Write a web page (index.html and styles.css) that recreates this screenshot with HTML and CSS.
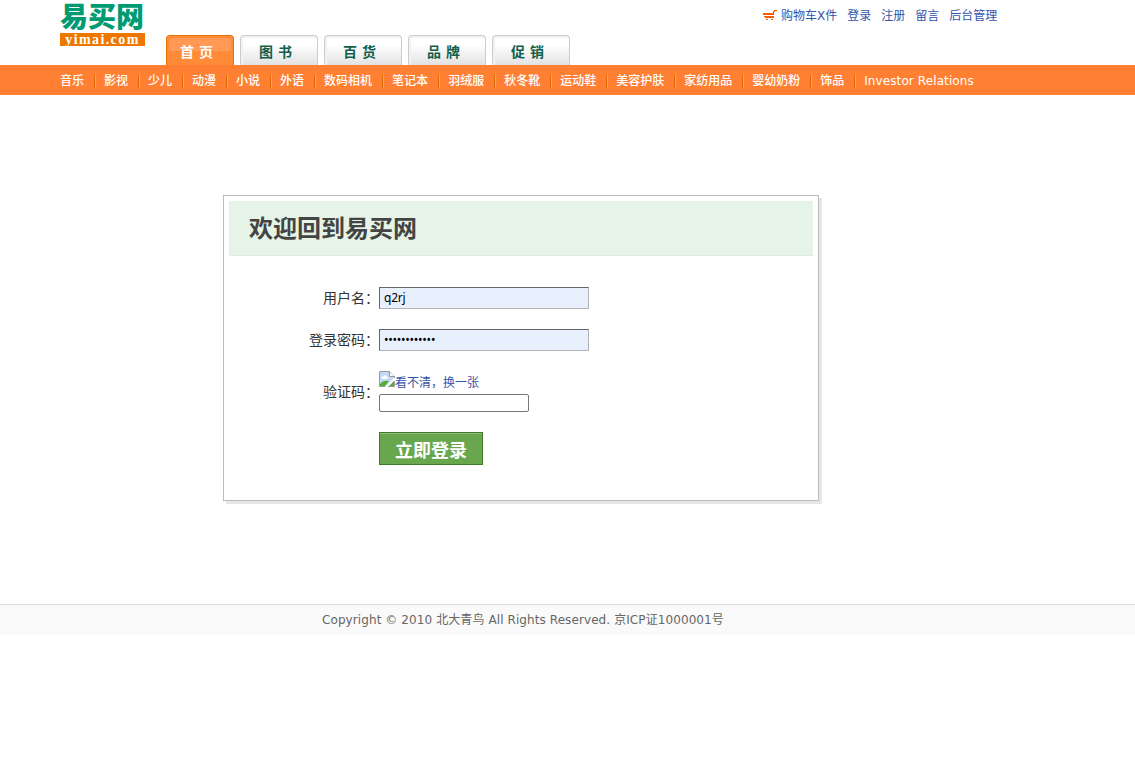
FILE: index.html
```html
<!DOCTYPE html>
<html lang="zh-CN">
<head>
    <meta charset="UTF-8">
    <title>易买网 - 登录</title>
    <link rel="stylesheet" href="styles.css">
</head>
<body>
    <div id="header" class="wrap">
        <div id="logo">
            <div class="logo-cn">易买网</div>
            <div class="logo-en">yimai.com</div>
        </div>
        <ul class="tabs">
            <li class="current"><a href="#">首页</a></li>
            <li><a href="#">图书</a></li>
            <li><a href="#">百货</a></li>
            <li><a href="#">品牌</a></li>
            <li><a href="#">促销</a></li>
        </ul>
        <div class="help">
            <a href="#" class="shopping"><svg class="cart" width="14" height="12" viewBox="0 0 14 12" shape-rendering="crispEdges"><path d="M0 4h10V2h1V1h3v1h-2v1h-1v3H0zM1 7h10v2H2V8H1zM3 10h2v1H3zM8 10h2v1H8z" fill="#ff5a00"/></svg>购物车X件</a>
            <a href="#">登录</a>
            <a href="#">注册</a>
            <a href="#">留言</a>
            <a href="#">后台管理</a>
        </div>
    </div>
    <div id="childNav">
        <ul class="wrap">
            <li><span>音乐</span></li>
            <li><span>影视</span></li>
            <li><span>少儿</span></li>
            <li><span>动漫</span></li>
            <li><span>小说</span></li>
            <li><span>外语</span></li>
            <li><span>数码相机</span></li>
            <li><span>笔记本</span></li>
            <li><span>羽绒服</span></li>
            <li><span>秋冬靴</span></li>
            <li><span>运动鞋</span></li>
            <li><span>美容护肤</span></li>
            <li><span>家纺用品</span></li>
            <li><span>婴幼奶粉</span></li>
            <li><span>饰品</span></li>
            <li class="last"><span>Investor Relations</span></li>
        </ul>
    </div>
    <div id="login">
        <h1>欢迎回到易买网</h1>
        <form action="#" method="post">
            <div class="row">
                <label for="userName">用户名：</label>
                <input class="text" type="text" id="userName" value="q2rj">
            </div>
            <div class="row">
                <label for="passWord">登录密码：</label>
                <input class="text" type="password" id="passWord" value="123456789012">
            </div>
            <div class="row">
                <label for="veryCode">验证码：</label>
                <div class="code">
                    <a href="#"><svg width="16" height="16" viewBox="0 0 16 16"><path d="M1 1h9v5h5v1L7 15H1z" fill="#c3d9fa"/><path d="M3 8c-1.500-2 .5-3 1-2 1-2.500 4-2 3.500 0C9.500 6 9 8 8 8z" fill="#fff"/><path d="M1 15v-2c2-3 5-4 9-3l-4 5z" fill="#55b030"/><path d="M.5 15.500V.5h10l5 5V7M.5 15.500H6" fill="none" stroke="#999"/><path d="M10.500.5v5h5" fill="#fff" stroke="#999"/><path d="M10 15l5-5v5z" fill="#55b030"/><path d="M9 15.500h6.500V10" fill="none" stroke="#999"/></svg>看不清，换一张</a>
                    <input type="text" id="veryCode">
                </div>
            </div>
            <div class="row">
                <button type="submit">立即登录</button>
            </div>
        </form>
    </div>
    <div id="footer">
        Copyright © 2010 北大青鸟 All Rights Reserved. 京ICP证1000001号
    </div>
</body>
</html>
```
FILE: styles.css
```css
* {
    margin: 0;
    padding: 0;
    box-sizing: border-box;
}
body {
    font: 12px/18px "DejaVu Sans", "Noto Sans CJK SC", sans-serif;
    color: #333;
    background: #fff;
}
ul {
    list-style: none;
}
a {
    color: #3355aa;
    text-decoration: none;
}
.wrap {
    padding-left: 60px;
}
#header {
    display: flex;
    height: 65px;
}
#logo {
    width: 85px;
    margin-right: 21px;
}
.logo-cn {
    height: 33px;
    padding-top: 2px;
    font: 900 28px/32px "Liberation Sans", "Noto Sans CJK SC", sans-serif;
    color: #009b72;
    white-space: nowrap;
}
.logo-en {
    height: 13px;
    background: #ee7700;
    color: #fff;
    font: bold 14px/13px "Liberation Serif", serif;
    letter-spacing: 1.4px;
    text-align: center;
}
.tabs {
    display: flex;
    gap: 6px;
    padding-top: 35px;
    width: 597px;
}
.tabs li {
    width: 78px;
    height: 30px;
    padding-left: 18px;
    border: 1px solid #ccc;
    border-bottom: none;
    border-radius: 4px 4px 0 0;
    background: linear-gradient(#fff 30%, #e2e2e2);
    box-shadow: inset 2px 2px 1px #f2f2f2;
    font-size: 14px;
    font-weight: bold;
    line-height: 32px;
    letter-spacing: 5px;
    white-space: nowrap;
}
.tabs a {
    color: #10604c;
}
.tabs .current {
    width: 68px;
    padding-left: 13px;
    border: 1px solid #e87200;
    border-bottom: none;
    background: linear-gradient(#ff9955 15px, #ff8a38 15px);
    box-shadow: inset 2px 2px #ff8a38, inset -2px 0 #ff8a38;
}
.tabs .current a {
    color: #fff;
}
.help {
    display: flex;
    gap: 10px;
    padding-top: 7px;
}
.cart {
    margin-right: 4px;
    vertical-align: -1px;
}
#childNav {
    height: 30px;
    background: #ff8033;
    color: #fff;
    line-height: 30px;
}
#childNav ul {
    display: flex;
}
#childNav li {
    display: flex;
    align-items: center;
    height: 30px;
    white-space: nowrap;
    font-weight: 500;
}
#childNav span {
    padding-top: 2px;
}
#childNav li:after {
    content: "";
    height: 14px;
    margin: 2px 8px 0 10px;
    border-left: 1px solid #dd6600;
    border-right: 1px solid #ffa54c;
}
#childNav .last:after {
    display: none;
}
#childNav .last {
    letter-spacing: 0.1px;
}
#login {
    width: 596px;
    height: 306px;
    margin: 100px 0 0 223px;
    padding: 5px;
    border: 1px solid #bbb;
    box-shadow: 3px 3px #e6e6e6;
}
#login h1 {
    height: 55px;
    padding-left: 20px;
    border-bottom: 1px solid #e4e8e4;
    background: #e6f4e7;
    color: #444;
    font-size: 24px;
    line-height: 57px;
}
#login form {
    padding: 31px 0 0 150px;
}
.row {
    display: flex;
    align-items: center;
    margin-bottom: 20px;
}
.row label {
    width: 100px;
    margin-left: -100px;
    text-align: right;
    font-size: 14px;
}
.row input {
    font: 12px "Noto Sans", sans-serif;
    color: #000;
}
.row .text {
    width: 210px;
    height: 22px;
    padding: 0 4px 2px;
    border: 1px solid;
    border-color: #666 #b3b3b3 #b3b3b3 #666;
    background: #e8f0fe;
    letter-spacing: -0.25px;
}
.code {
    height: 41px;
}
.code a {
    display: flex;
    height: 23px;
    line-height: 25px;
}
#veryCode {
    display: block;
    width: 150px;
    height: 18px;
    border: 1px solid #767676;
    border-radius: 2px;
}
button {
    width: 104px;
    height: 33px;
    border: 1px solid #3d7a2c;
    box-shadow: inset 0 1px #90bd80;
    background: #69a74e;
    color: #fff;
    font: bold 18px/30px "Noto Sans CJK SC", sans-serif;
}
#footer {
    height: 31px;
    margin-top: 103px;
    padding-left: 322px;
    border-top: 1px solid #ddd;
    background: #fafafa;
    color: #666;
    line-height: 30px;
    letter-spacing: 0.09px;
}
```
